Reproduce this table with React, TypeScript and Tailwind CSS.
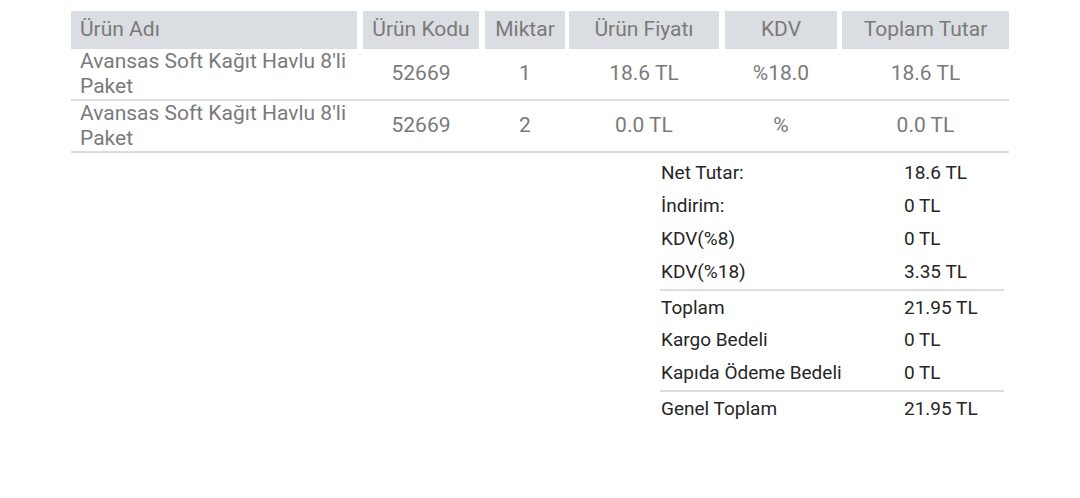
import React from "react";

type Col = { label: string; cls: string; align: string };

const cols: Col[] = [
  { label: "Ürün Adı", cls: "w-[286px]", align: "text-left pl-[9px]" },
  { label: "Ürün Kodu", cls: "w-[116px] ml-[6px]", align: "text-center" },
  { label: "Miktar", cls: "w-[80px] ml-[6px]", align: "text-center" },
  { label: "Ürün Fiyatı", cls: "w-[150px] ml-[4px]", align: "text-center" },
  { label: "KDV", cls: "w-[112px] ml-[6px]", align: "text-center" },
  { label: "Toplam Tutar", cls: "w-[167px] ml-[5px]", align: "text-center" },
];

const rows = [
  ["Avansas Soft Kağıt Havlu 8'li Paket", "52669", "1", "18.6 TL", "%18.0", "18.6 TL"],
  ["Avansas Soft Kağıt Havlu 8'li Paket", "52669", "2", "0.0 TL", "%", "0.0 TL"],
];

const summary = [
  { label: "Net Tutar:", value: "18.6 TL", line: false },
  { label: "İndirim:", value: "0 TL", line: false },
  { label: "KDV(%8)", value: "0 TL", line: false },
  { label: "KDV(%18)", value: "3.35 TL", line: false },
  { label: "Toplam", value: "21.95 TL", line: true },
  { label: "Kargo Bedeli", value: "0 TL", line: false },
  { label: "Kapıda Ödeme Bedeli", value: "0 TL", line: false },
  { label: "Genel Toplam", value: "21.95 TL", line: true },
];

const App: React.FC = () => {
  return (
    <div
      className="w-[1080px] min-h-[498px] bg-white pt-[11px] pl-[71px]"
      style={{ fontFamily: "Roboto, 'Liberation Sans', sans-serif" }}
    >
      <div className="w-[938px]">
        {/* header */}
        <div className="flex h-[38px] text-[21px] text-[#7a7a7a]">
          {cols.map((c) => (
            <div
              key={c.label}
              className={`${c.cls} ${c.align} bg-[#dadde1] flex items-center ${
                c.align === "text-center" ? "justify-center" : ""
              }`}
            >
              {c.label}
            </div>
          ))}
        </div>

        {/* rows */}
        {rows.map((r, i) => (
          <div
            key={i}
            className="flex h-[52px] border-b-2 border-[#dcdde0] text-[21px] text-[#7a7a7a]"
          >
            {r.map((v, j) => (
              <div
                key={j}
                className={`${cols[j].cls} flex items-center ${
                  j === 0 ? "pl-[9px] leading-[25px]" : "justify-center"
                }`}
              >
                {v}
              </div>
            ))}
          </div>
        ))}

        {/* summary */}
        <div className="flex justify-end pr-[5px] mt-[4px]">
          <div className="w-[344px] text-[19px] text-[#262626]">
            {summary.map((s) => (
              <div
                key={s.label}
                className={`flex items-center h-[33px] ${
                  s.line ? "border-t-2 border-[#dcdde0] h-[35px] pt-[1px]" : ""
                }`}
              >
                <div className="w-[244px] pl-[1px]">{s.label}</div>
                <div>{s.value}</div>
              </div>
            ))}
          </div>
        </div>
      </div>
    </div>
  );
};

export default App;
